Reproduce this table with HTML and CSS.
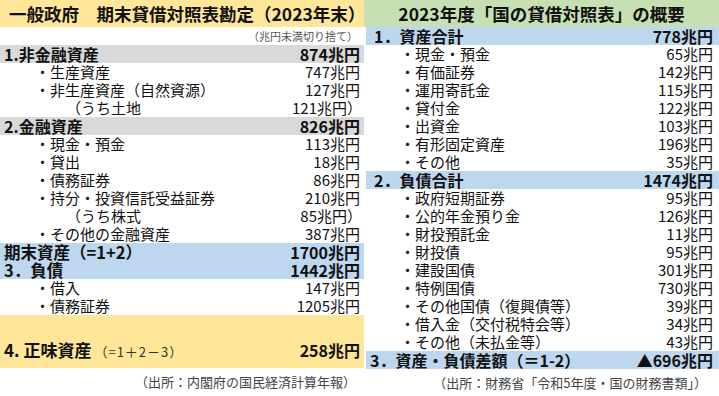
FILE: index.html
```html
<!DOCTYPE html>
<html lang="ja">
<head>
<meta charset="utf-8">
<link rel="stylesheet" href="styles.css">
</head>
<body>
<div class="page">
  <section class="panel left">
    <div class="title gold">一般政府　期末貸借対照表勘定（2023年末）</div>
    <div class="note">（兆円未満切り捨て）</div>
    <div class="row sec grey"><span>1.非金融資産</span><span>874兆円</span></div>
    <div class="row item"><span>・生産資産</span><span>747兆円</span></div>
    <div class="row item"><span>・非生産資産（自然資源）</span><span>127兆円</span></div>
    <div class="row sub"><span>（うち土地</span><span>121兆円）</span></div>
    <div class="row sec grey"><span>2.金融資産</span><span>826兆円</span></div>
    <div class="row item"><span>・現金・預金</span><span>113兆円</span></div>
    <div class="row item"><span>・貸出</span><span>18兆円</span></div>
    <div class="row item"><span>・債務証券</span><span>86兆円</span></div>
    <div class="row item"><span>・持分・投資信託受益証券</span><span>210兆円</span></div>
    <div class="row sub"><span>（うち株式</span><span>85兆円）</span></div>
    <div class="row item"><span>・その他の金融資産</span><span>387兆円</span></div>
    <div class="row sec blue"><span class="big">期末資産（=1+2）</span><span>1700兆円</span></div>
    <div class="row sec blue"><span class="big">3．負債</span><span>1442兆円</span></div>
    <div class="row item"><span>・借入</span><span>147兆円</span></div>
    <div class="row item"><span>・債務証券</span><span>1205兆円</span></div>
    <div class="net gold"><span><b class="netlabel">4. 正味資産</b><span class="formula">（=1＋2－3）</span></span><span class="netval">258兆円</span></div>
    <div class="source">（出所：内閣府の国民経済計算年報）</div>
  </section>
  <section class="panel right">
    <div class="title green">2023年度「国の貸借対照表」の概要</div>
    <div class="row sec blue rsec"><span>1．資産合計</span><span>778兆円</span></div>
    <div class="row item ritem"><span>・現金・預金</span><span>65兆円</span></div>
    <div class="row item ritem"><span>・有価証券</span><span>142兆円</span></div>
    <div class="row item ritem"><span>・運用寄託金</span><span>115兆円</span></div>
    <div class="row item ritem"><span>・貸付金</span><span>122兆円</span></div>
    <div class="row item ritem"><span>・出資金</span><span>103兆円</span></div>
    <div class="row item ritem"><span>・有形固定資産</span><span>196兆円</span></div>
    <div class="row item ritem"><span>・その他</span><span>35兆円</span></div>
    <div class="row sec blue rsec"><span>2．負債合計</span><span>1474兆円</span></div>
    <div class="row item ritem"><span>・政府短期証券</span><span>95兆円</span></div>
    <div class="row item ritem"><span>・公的年金預り金</span><span>126兆円</span></div>
    <div class="row item ritem"><span>・財投預託金</span><span>11兆円</span></div>
    <div class="row item ritem"><span>・財投債</span><span>95兆円</span></div>
    <div class="row item ritem"><span>・建設国債</span><span>301兆円</span></div>
    <div class="row item ritem"><span>・特例国債</span><span>730兆円</span></div>
    <div class="row item ritem"><span>・その他国債（復興債等）</span><span>39兆円</span></div>
    <div class="row item ritem"><span>・借入金（交付税特会等）</span><span>34兆円</span></div>
    <div class="row item ritem"><span>・その他（未払金等）</span><span>43兆円</span></div>
    <div class="row sec blue rsec last"><span>3．資産・負債差額（＝1-2）</span><span>▲696兆円</span></div>
    <div class="source rsource">（出所：財務省「令和5年度・国の財務書類」）</div>
  </section>
</div>
</body>
</html>
```
FILE: styles.css
```css
* { box-sizing: border-box; }
html, body { margin: 0; padding: 0; background: #fff; }
body {
  font-family: "Noto Sans CJK JP", "Noto Sans", sans-serif;
  color: #111;
  width: 719px;
  height: 396px;
  overflow: hidden;
}
.page { display: flex; width: 719px; }
.panel { display: flex; flex-direction: column; }
.left { width: 364px; }
.right { width: 355px; }
.title {
  height: 27px;
  line-height: 27px;
  font-size: 17.5px;
  font-weight: bold;
  white-space: nowrap;
}
.left .title { padding-left: 9px; }
.right .title { text-align: center; }
.gold { background: #ffe699; }
.green { background: #c6e0b4; }
.grey { background: #d9d9d9; }
.blue { background: #bdd7ee; }
.note {
  height: 18px;
  line-height: 18px;
  font-size: 11px;
  color: #555;
  text-align: right;
  padding-right: 6px;
}
.row {
  height: 18px;
  line-height: 18px;
  display: flex;
  justify-content: space-between;
  align-items: center;
  white-space: nowrap;
  padding-right: 4px;
}
.sec { font-size: 16px; font-weight: bold; padding-left: 4px; }
.sec .big { font-weight: 600; font-size: 16.5px; }
.item { font-size: 15px; padding-left: 35px; }
.sub { font-size: 15px; padding-left: 66px; padding-right: 2px; }
.net {
  height: 53px;
  display: flex;
  justify-content: space-between;
  align-items: flex-end;
  padding: 0 4px 6px 4px;
  white-space: nowrap;
}
.netlabel { font-size: 17px; }
.formula { font-size: 13px; color: #333; letter-spacing: 1px; margin-left: 3px; }
.netval { font-size: 16px; font-weight: bold; }
.source {
  font-size: 13px;
  color: #444;
  text-align: right;
  padding-right: 8px;
  padding-top: 4px;
  white-space: nowrap;
}
.rsec { padding-left: 8px; padding-right: 6px; margin-left: 2px; }
.rsec.last { padding-left: 4px; }
.ritem { padding-left: 36px; padding-right: 6px; }
.rsource { padding-right: 12px; padding-top: 4px; }
```
